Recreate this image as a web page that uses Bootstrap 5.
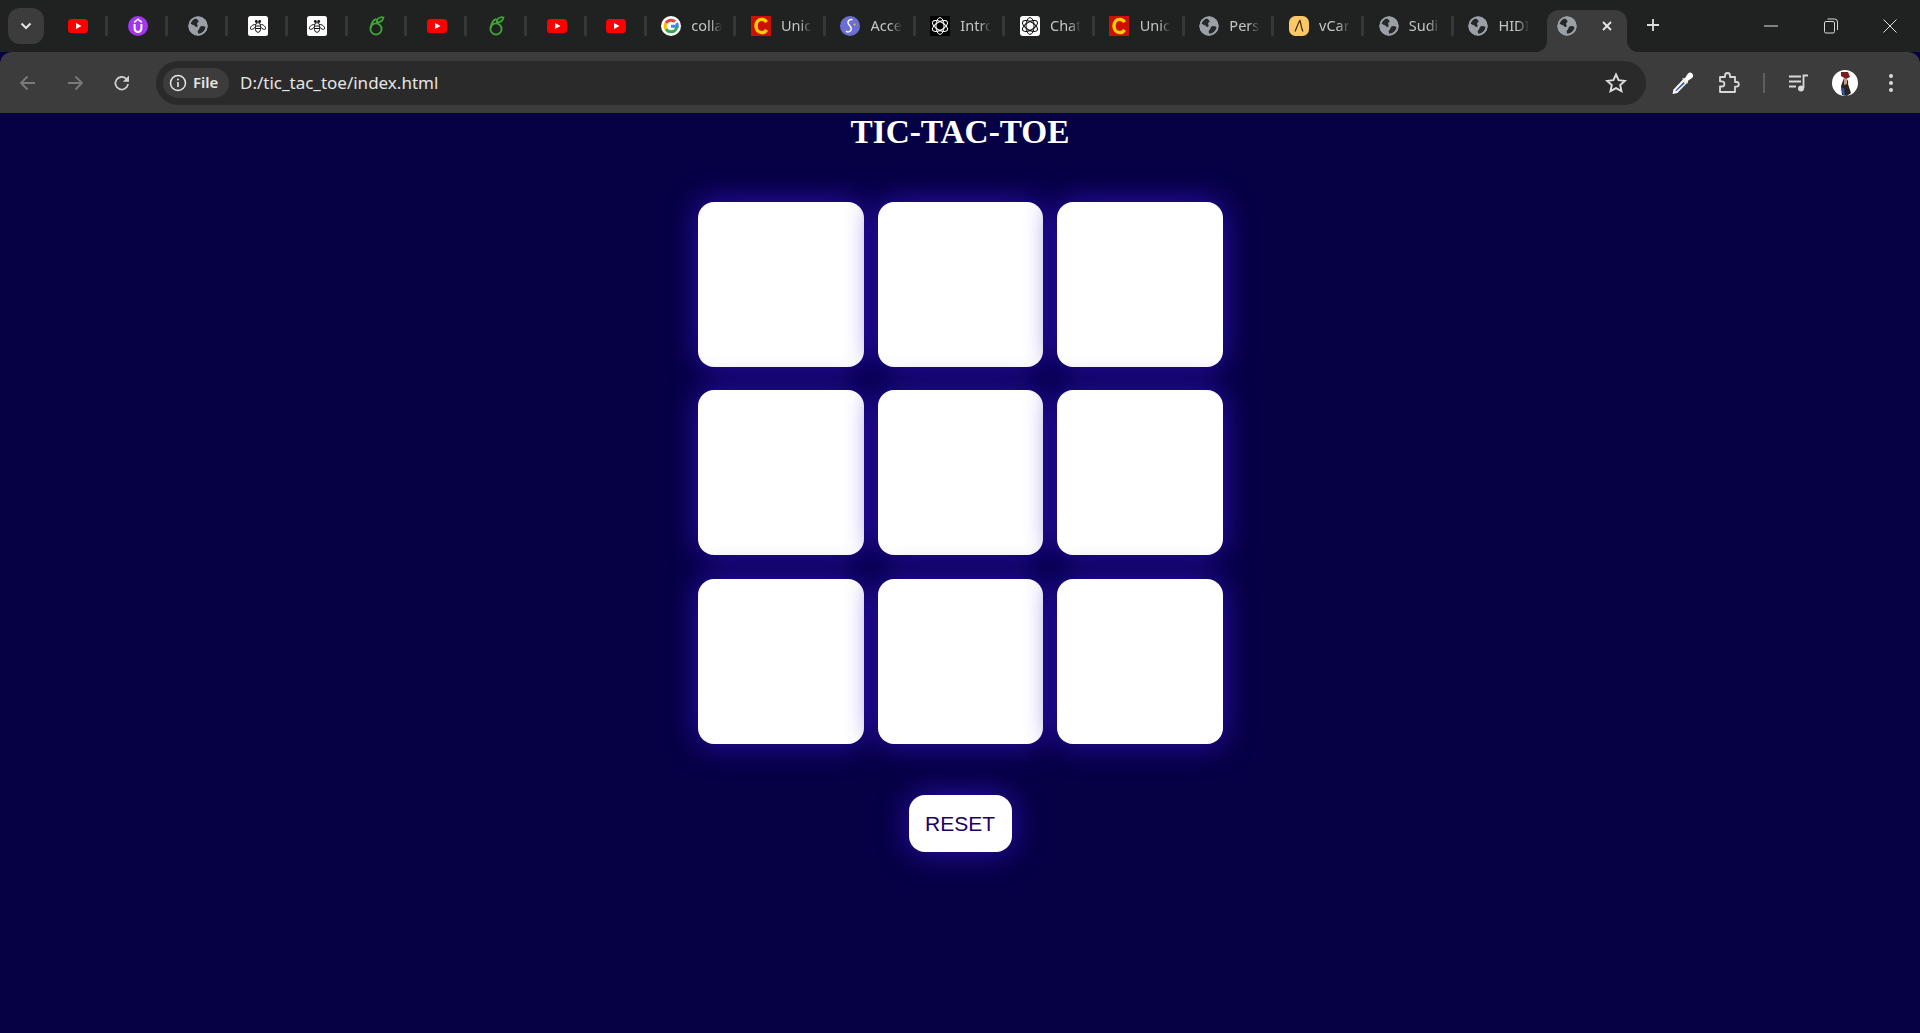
<!DOCTYPE html>
<html lang="en">
<head>
<meta charset="utf-8">
<title>Tic Tac Toe</title>
<link href="https://cdn.jsdelivr.net/npm/bootstrap@5.3.0/dist/css/bootstrap.min.css" rel="stylesheet">
<style>
html,body{height:100%;}
body{background:#060045;font-family:"Noto Sans",sans-serif;overflow:hidden;}
.shell{height:1033px;}
.strip{height:52px;background:#202221;padding-left:8px;color:#c2c3c3;}
.tabmenu{width:36px;height:36px;border-radius:12px;background:#3c3c3c;margin-right:4.7px;}
.tabslot{height:52px;}
.tabslot.narrow{width:56.8px;padding-left:19.6px;}
.tabslot.wide{width:86.7px;padding-left:14.4px;}
.tabsep{width:3px;height:20px;background:#363838;border-radius:1px;}
.fav{width:20px;height:20px;display:block;flex-shrink:0;}
.tabname{width:31px;margin-left:10.2px;font-size:14.5px;white-space:nowrap;color:#c4c5c5;-webkit-mask-image:linear-gradient(90deg,#000 62%,transparent 100%);mask-image:linear-gradient(90deg,#000 62%,transparent 100%);}
.acttab{width:80px;height:42px;margin-top:10px;margin-left:6px;background:#3c3c3c;border-radius:12px 12px 0 0;padding:6px 0 0 10px;}
.acttab::before,.acttab::after{content:"";position:absolute;bottom:0;width:12px;height:12px;}
.acttab::before{left:-12px;background:radial-gradient(circle at 0 0,transparent 12px,#3c3c3c 12.5px);}
.acttab::after{right:-12px;background:radial-gradient(circle at 100% 0,transparent 12px,#3c3c3c 12.5px);}
.closex{margin:5px 0 0 25px;}
.plusbtn{margin-left:17px;width:18px;height:18px;}
.winbtn{width:59.6px;height:52px;}
.bar{height:61px;background:#3c3c3c;border-radius:12px 12px 0 0;padding:0 6px 0 4.5px;}
.navbtn{width:47px;height:61px;}
.omni{width:1490px;height:44px;margin-left:10.5px;background:#2a2a2a;border-radius:22px;padding:0 19px 0 7px;}
.chip{width:66px;height:30px;background:#3c3c3c;border-radius:15px;padding-left:6px;font-weight:600;font-size:15px;color:#e6e6e6;}
.chip span{margin-left:6px;}
.addr{margin:-1px 0 0 11px;font-size:17px;color:#e5e5e5;line-height:1;}
.sidebtn{width:46px;height:61px;}
.bardiv{width:24px;}
.bardiv i{display:block;width:2px;height:20px;background:#5f5f5f;}
.game{background:#060045;}
.gametitle{font-family:"Liberation Serif",serif;font-weight:700;font-size:33.3px;line-height:38.4px;color:#fff;margin:0;}
.board{display:grid;grid-template-columns:repeat(3,165.6px);grid-auto-rows:165px;gap:23.6px 14px;margin:50.2px 0 0 1px;}
.cellbtn,.cellbtn:hover{background:#fff;border:0;border-radius:16px;box-shadow:0 0 30px #2d10b4;padding:0;}
.resetbtn,.resetbtn:hover{margin-top:51.2px;width:103px;height:57px;background:#fff;border:0;border-radius:16px;box-shadow:0 0 30px #2d10b4;font-family:"Liberation Sans",sans-serif;font-size:21px;color:#1b0066;padding:0;}
.knotblack{color:#fff;background:#000;}
.knotwhite{color:#111;background:#fff;border-radius:3px;}
</style>
</head>
<body>
<svg width="0" height="0" class="d-block position-absolute">
<defs>
<symbol id="yt" viewBox="0 0 20 20"><rect y="3" width="20" height="14" rx="3.6" fill="#f00"/><path d="M8 7l5.500 3L8 13z" fill="#fff"/></symbol>
<symbol id="ud" viewBox="0 0 20 20"><circle cx="10" cy="10" r="10" fill="#a435f0"/><path d="M6.200 6.300L10 3.200l3.800 3.100" fill="none" stroke="#fff" stroke-width="1.600"/><path d="M6.600 8v4.600a3.400 3.400 0 0 0 6.800 0V8" fill="none" stroke="#fff" stroke-width="2"/></symbol>
<symbol id="gl" viewBox="0 0 20 20"><circle cx="10" cy="10" r="9.500" fill="#9aa0a6"/><path d="M7 2.200C5 3 3 5 2.200 7.500L5 9c1.500.2 2 1.200 3 2 1.300.2 2-1 1.400-2.300C8.500 7.200 9.500 6.500 10.500 6 11 4.500 9.500 3 7 2.200zM17.700 11.200c-1.700-1.200-3.500-1.700-5.200-.7-1.300 1-.8 2.700-2 3.500-1 .5-1 2-.2 3.800 3.500 0 6.400-2.600 7.400-6.600z" fill="#26282a"/><circle cx="10" cy="10" r="8.800" fill="none" stroke="#9aa0a6" stroke-width="1.800"/></symbol>
<symbol id="bee" viewBox="0 0 20 20"><rect width="20" height="20" rx="2.500" fill="#fff"/><g fill="none" stroke="#111" stroke-width="1"><ellipse cx="10" cy="11.500" rx="2.700" ry="4.800"/><path d="M7.500 10h5M7.500 12.500h5"/><path d="M7.500 8.500C4 8.500 2 11 2.500 13c1 1 3.500 0 5-2M12.500 8.500c3.500 0 5.500 2.500 5 4.500-1 1-3.500 0-5-2"/></g><circle cx="8.300" cy="5.500" r="1.400" fill="#111"/><circle cx="11.700" cy="5.500" r="1.400" fill="#111"/></symbol>
<symbol id="ap" viewBox="0 0 20 20"><g fill="none" stroke="#3fa535" stroke-width="1.800"><circle cx="9" cy="13" r="5.600"/><path d="M3.600 12C4.500 7 6.500 3.500 9.500 3"/><path d="M9.800 4.500C11 1.800 14 .8 16.500 1.500 16.200 4 13.500 6.800 10 6.500z"/></g></symbol>
<symbol id="gg" viewBox="0 0 20 20"><circle cx="10" cy="10" r="10" fill="#fff"/><g fill="none" stroke-width="3"><path d="M10 10.200h6.300c0-1.400-.2-2.300-.7-3.200" stroke="#4285f4"/><path d="M16 10.200c-.3 3.400-2.900 5.600-6 5.600-2.100 0-4-1.100-5-2.800" stroke="#34a853"/><path d="M5 13c-1.100-1.800-1.100-4.200 0-6" stroke="#fbbc05"/><path d="M5 7c1-1.700 2.900-2.800 5-2.800 1.600 0 2.900.5 4 1.500" stroke="#ea4335"/></g></symbol>
<symbol id="cc" viewBox="0 0 20 20"><rect width="20" height="20" fill="#cc1100"/><path d="M15.500 6.200C14.500 4.400 12.800 3.400 10.800 3.400 7.300 3.400 5 6.200 5 10s2.300 6.600 5.800 6.600c2 0 3.700-1 4.700-2.800" fill="none" stroke="#fbd000" stroke-width="3.400"/></symbol>
<symbol id="ss" viewBox="0 0 20 20"><circle cx="10" cy="10" r="10" fill="#6b6fd4"/><path d="M12.500 3.800C10 3 7.800 4.600 8 6.800c.2 2.300 3.400 3.600 3.300 6.200-.1 2.500-3.300 3.800-5.300 2.200" fill="none" stroke="#fff" stroke-width="1.500"/><circle cx="14.600" cy="8.400" r="1" fill="#fbbf3c"/></symbol>
<symbol id="knot" viewBox="0 0 20 20"><g fill="none" stroke-width="1" stroke="currentColor"><ellipse cx="10" cy="10" rx="4" ry="8.400"/><ellipse cx="10" cy="10" rx="4" ry="8.400" transform="rotate(60 10 10)"/><ellipse cx="10" cy="10" rx="4" ry="8.400" transform="rotate(120 10 10)"/></g></symbol>
<symbol id="vc" viewBox="0 0 20 20"><rect width="20" height="20" rx="6.500" fill="#fcc865"/><path d="M6 15.500C8 11 9.500 6 11 4.500c1 2.500.8 7 3 11" fill="none" stroke="#3b2a10" stroke-width="1.200"/></symbol>
</defs>
</svg>
<div class="shell d-flex flex-column">
  <div class="strip d-flex align-items-start flex-shrink-0">
    <div class="tabmenu d-flex align-items-center justify-content-center mt-2 flex-shrink-0">
      <svg width="12" height="8" viewBox="0 0 12 8"><path d="M1.500 1.500L6 6l4.500-4.500" fill="none" stroke="#e6e6e6" stroke-width="2"/></svg>
    </div>
    <div class="d-flex align-items-center">
      <div class="tabslot narrow d-flex align-items-center"><svg class="fav"><use href="#yt"/></svg></div><div class="tabsep"></div>
      <div class="tabslot narrow d-flex align-items-center"><svg class="fav"><use href="#ud"/></svg></div><div class="tabsep"></div>
      <div class="tabslot narrow d-flex align-items-center"><svg class="fav"><use href="#gl"/></svg></div><div class="tabsep"></div>
      <div class="tabslot narrow d-flex align-items-center"><svg class="fav"><use href="#bee"/></svg></div><div class="tabsep"></div>
      <div class="tabslot narrow d-flex align-items-center"><svg class="fav"><use href="#bee"/></svg></div><div class="tabsep"></div>
      <div class="tabslot narrow d-flex align-items-center"><svg class="fav"><use href="#ap"/></svg></div><div class="tabsep"></div>
      <div class="tabslot narrow d-flex align-items-center"><svg class="fav"><use href="#yt"/></svg></div><div class="tabsep"></div>
      <div class="tabslot narrow d-flex align-items-center"><svg class="fav"><use href="#ap"/></svg></div><div class="tabsep"></div>
      <div class="tabslot narrow d-flex align-items-center"><svg class="fav"><use href="#yt"/></svg></div><div class="tabsep"></div>
      <div class="tabslot narrow d-flex align-items-center"><svg class="fav"><use href="#yt"/></svg></div><div class="tabsep"></div>
      <div class="tabslot wide d-flex align-items-center"><svg class="fav"><use href="#gg"/></svg><div class="tabname">colla</div></div><div class="tabsep"></div>
      <div class="tabslot wide d-flex align-items-center"><svg class="fav"><use href="#cc"/></svg><div class="tabname">Unic</div></div><div class="tabsep"></div>
      <div class="tabslot wide d-flex align-items-center"><svg class="fav"><use href="#ss"/></svg><div class="tabname">Acce</div></div><div class="tabsep"></div>
      <div class="tabslot wide d-flex align-items-center"><svg class="fav knotblack"><use href="#knot"/></svg><div class="tabname">Intro</div></div><div class="tabsep"></div>
      <div class="tabslot wide d-flex align-items-center"><svg class="fav knotwhite"><use href="#knot"/></svg><div class="tabname">Chat</div></div><div class="tabsep"></div>
      <div class="tabslot wide d-flex align-items-center"><svg class="fav"><use href="#cc"/></svg><div class="tabname">Unic</div></div><div class="tabsep"></div>
      <div class="tabslot wide d-flex align-items-center"><svg class="fav"><use href="#gl"/></svg><div class="tabname">Pers</div></div><div class="tabsep"></div>
      <div class="tabslot wide d-flex align-items-center"><svg class="fav"><use href="#vc"/></svg><div class="tabname">vCar</div></div><div class="tabsep"></div>
      <div class="tabslot wide d-flex align-items-center"><svg class="fav"><use href="#gl"/></svg><div class="tabname">Sudi</div></div><div class="tabsep"></div>
      <div class="tabslot wide d-flex align-items-center"><svg class="fav"><use href="#gl"/></svg><div class="tabname">HIDI</div></div>
    </div>
    <div class="acttab d-flex align-items-start position-relative flex-shrink-0">
      <svg class="fav"><use href="#gl"/></svg>
      <svg class="closex" width="10" height="10" viewBox="0 0 10 10"><path d="M1 1l8 8M9 1l-8 8" stroke="#e8e8e8" stroke-width="1.800"/></svg>
    </div>
    <svg class="plusbtn mt-3 flex-shrink-0" viewBox="0 0 18 18"><path d="M9 3v12M3 9h12" stroke="#dcdcdc" stroke-width="1.800"/></svg>
    <div class="d-flex ms-auto">
      <div class="winbtn d-flex align-items-center justify-content-center"><svg width="14" height="2" viewBox="0 0 14 2"><path d="M0 1h14" stroke="#e0e0e0"/></svg></div>
      <div class="winbtn d-flex align-items-center justify-content-center"><svg width="14" height="16" viewBox="0 0 14 16"><rect x=".5" y="3.500" width="10" height="11.500" rx="1.500" fill="none" stroke="#d8d8d8"/><path d="M3.500 1h7a3 3 0 0 1 3 3v8" fill="none" stroke="#d8d8d8"/></svg></div>
      <div class="winbtn d-flex align-items-center justify-content-center"><svg width="14" height="14" viewBox="0 0 14 14"><path d="M.5.500l13 13M13.500.500l-13 13" stroke="#e0e0e0"/></svg></div>
    </div>
  </div>
  <div class="bar d-flex align-items-center flex-shrink-0">
    <div class="navbtn d-flex align-items-center justify-content-center"><svg width="18" height="16" viewBox="0 0 18 16"><path d="M16 8H2M8.500 1.500L2 8l6.500 6.500" fill="none" stroke="#7a7a7a" stroke-width="1.800"/></svg></div>
    <div class="navbtn d-flex align-items-center justify-content-center"><svg width="18" height="16" viewBox="0 0 18 16"><path d="M2 8h14M9.500 1.500L16 8l-6.500 6.500" fill="none" stroke="#7a7a7a" stroke-width="1.800"/></svg></div>
    <div class="navbtn d-flex align-items-center justify-content-center"><svg width="18" height="18" viewBox="0 0 18 18"><path d="M15 10a6.300 6.300 0 1 1-1.800-5.200L15.500 7" fill="none" stroke="#d0d0d0" stroke-width="1.800"/><path d="M16 1.500V7.800H9.800z" fill="#d0d0d0"/></svg></div>
    <div class="omni d-flex align-items-center flex-shrink-0">
      <div class="chip d-flex align-items-center flex-shrink-0">
        <svg width="18" height="18" viewBox="0 0 18 18"><circle cx="9" cy="9" r="7.500" fill="none" stroke="#e6e6e6" stroke-width="1.500"/><path d="M9 8v5" stroke="#e6e6e6" stroke-width="1.600"/><circle cx="9" cy="5.500" r="1" fill="#e6e6e6"/></svg>
        <span>File</span>
      </div>
      <div class="addr">D:/tic_tac_toe/index.html</div>
      <svg class="ms-auto" width="22" height="22" viewBox="0 0 22 22"><path d="M11 2.500l2.600 5.700 6.200.7-4.600 4.200 1.300 6.100L11 16.100l-5.500 3.100 1.300-6.100-4.600-4.200 6.200-.7z" fill="none" stroke="#dedede" stroke-width="1.900"/></svg>
    </div>
    <div class="sidebtn d-flex align-items-center justify-content-center ms-auto"><svg width="22" height="24" viewBox="0 0 22 24"><path d="M11 8.500L1.500 18.500 .5 23l4.800-1L15 12z" fill="#fff"/><path d="M11.500 11L4 18.800l-.8 1.600 1.700-.7 8-7.500z" fill="#2c57c8"/><path d="M10 7.500l3-.5 3-4.500c1.500-1.400 3-1 4.300.2 1.200 1.300 1.200 3-.3 4.300l-4 2.800-.5 3z" fill="#fff"/></svg></div>
    <div class="sidebtn d-flex align-items-center justify-content-center"><svg width="22" height="22" viewBox="0 0 22 22"><path d="M2 5h5V3.500a2.500 2.500 0 0 1 5 0V5h5v5h1.500a2.300 2.300 0 0 1 0 4.600H17V20H2v-5.500h1.800a2.600 2.600 0 0 0 0-5.200H2z" fill="none" stroke="#d8d8d8" stroke-width="1.800" stroke-linejoin="round"/></svg></div>
    <div class="bardiv d-flex justify-content-center"><i></i></div>
    <div class="sidebtn d-flex align-items-center justify-content-center"><svg width="20" height="18" viewBox="0 0 20 18"><path d="M0 2.500h12M0 7.500h12M0 12.500h7" stroke="#d8d8d8" stroke-width="1.800"/><path d="M14.500 14V1.500H19" fill="none" stroke="#d8d8d8" stroke-width="1.800"/><circle cx="12" cy="14.500" r="3" fill="#d8d8d8"/></svg></div>
    <div class="sidebtn d-flex align-items-center justify-content-center"><svg width="26" height="26" viewBox="0 0 26 26"><circle cx="13" cy="13" r="13" fill="#fff"/><path d="M9 2h7l2 5-4 2-5-3z" fill="#7a1c22"/><path d="M12 8c3 0 5 3 4 6l3 9-4 3-5-1-1-9z" fill="#2b2524"/><path d="M12 8l3 1 0 5-3 1z" fill="#c89a86"/><path d="M9 19l2 6 2 1-1-8z" fill="#2c57a8"/></svg></div>
    <div class="sidebtn d-flex align-items-center justify-content-center"><svg width="6" height="20" viewBox="0 0 6 20"><circle cx="3" cy="3" r="2" fill="#d8d8d8"/><circle cx="3" cy="10" r="2" fill="#d8d8d8"/><circle cx="3" cy="17" r="2" fill="#d8d8d8"/></svg></div>
  </div>
  <main class="game flex-grow-1 d-flex flex-column align-items-center">
    <h1 class="gametitle">TIC-TAC-TOE</h1>
    <div class="board">
      <button class="btn cellbtn" type="button" aria-label="cell 1"></button>
      <button class="btn cellbtn" type="button" aria-label="cell 2"></button>
      <button class="btn cellbtn" type="button" aria-label="cell 3"></button>
      <button class="btn cellbtn" type="button" aria-label="cell 4"></button>
      <button class="btn cellbtn" type="button" aria-label="cell 5"></button>
      <button class="btn cellbtn" type="button" aria-label="cell 6"></button>
      <button class="btn cellbtn" type="button" aria-label="cell 7"></button>
      <button class="btn cellbtn" type="button" aria-label="cell 8"></button>
      <button class="btn cellbtn" type="button" aria-label="cell 9"></button>
    </div>
    <button class="btn resetbtn" type="button">RESET</button>
  </main>
</div>
<script src="https://cdn.jsdelivr.net/npm/bootstrap@5.3.0/dist/js/bootstrap.bundle.min.js"></script>
</body>
</html>
